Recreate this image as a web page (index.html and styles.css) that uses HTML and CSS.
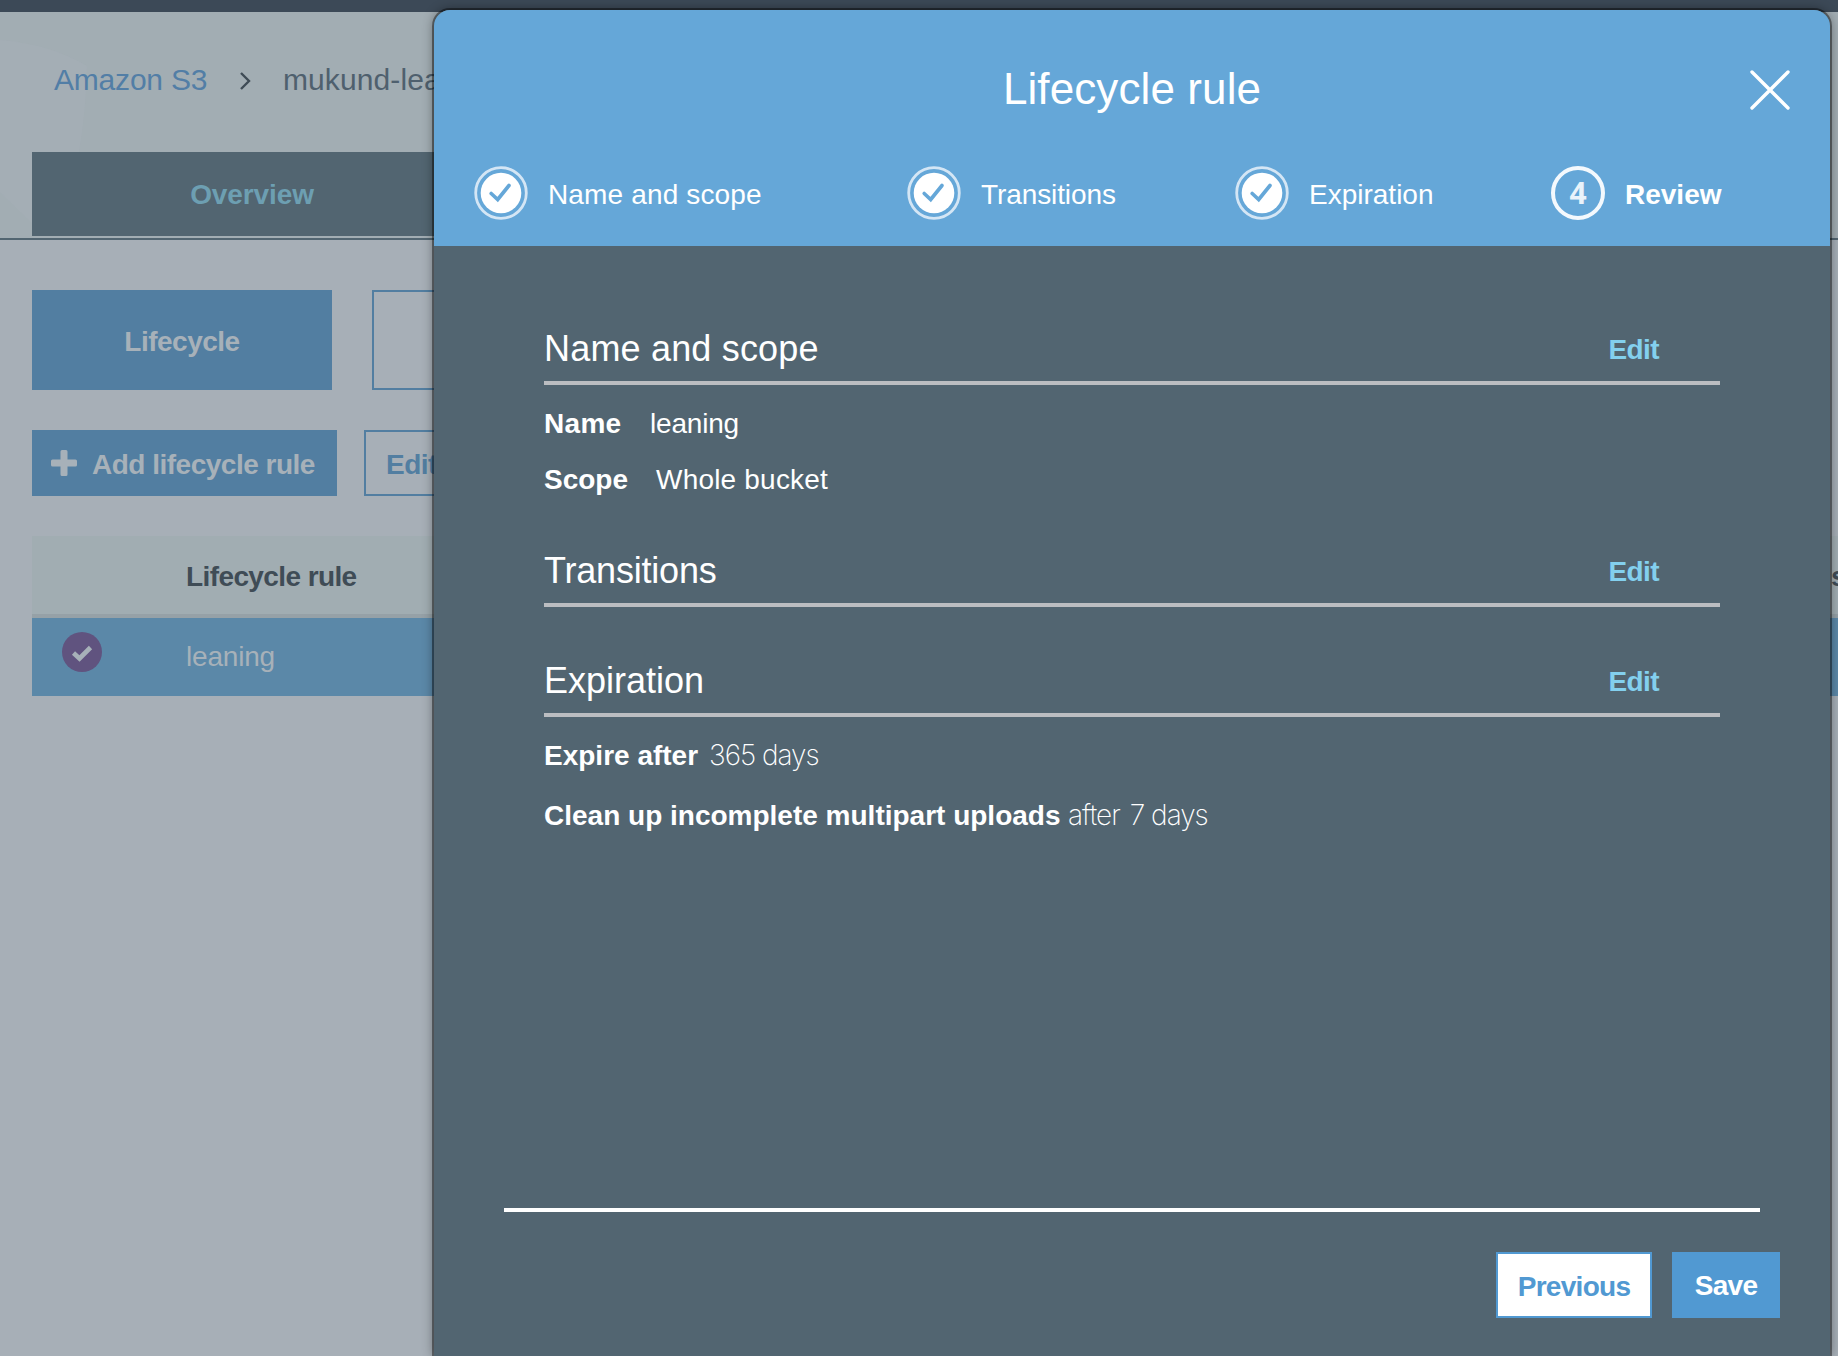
FILE: index.html
```html
<!DOCTYPE html>
<html lang="en">
<head>
<meta charset="utf-8">
<title>Lifecycle rule</title>
<link rel="stylesheet" href="styles.css">
</head>
<body>
<div class="page">
  <div class="topbar"></div>
  <header class="masthead">
    <svg class="swirl" viewBox="0 0 90 226" width="90" height="226"><path d="M0 28Q50 32 87 54Q86 100 79 140L32 211L0 180Z" fill="#a6afb7" opacity=".45"/></svg>
    <nav class="crumbs">
      <a class="crumb-link">Amazon S3</a>
      <svg class="chevron" width="12" height="20" viewBox="0 0 12 20"><path d="M2 2L10 10L2 18" fill="none" stroke="#3f4c56" stroke-width="2.4"/></svg>
      <span class="crumb-current">mukund-leaning</span>
    </nav>
    <div class="tab">Overview</div>
  </header>
  <main class="content">
    <div class="row modes">
      <div class="mode filled">Lifecycle</div>
      <div class="mode outlined"></div>
    </div>
    <div class="row actions">
      <div class="action filled"><svg width="26" height="26" viewBox="0 0 26 26"><path d="M11 0h4q1.500 0 1.500 1.500v8h8q1.500 0 1.500 1.500v4q0 1.500-1.500 1.500h-8v8q0 1.500-1.500 1.500h-4q-1.500 0-1.500-1.500v-8h-8q-1.500 0-1.500-1.500v-4q0-1.500 1.500-1.500h8v-8q0-1.500 1.500-1.500z" fill="#a7b1b9"/></svg><span>Add lifecycle rule</span></div>
      <div class="action outlined">Edit</div>
    </div>
    <div class="table">
      <div class="thead"><span>Lifecycle rule</span><span class="th-end">s</span></div>
      <div class="trow">
        <svg class="selected" width="40" height="40" viewBox="0 0 40 40"><circle cx="20" cy="20" r="20" fill="#60537f"/><path d="M11.500 21L17.500 26.500L28.500 15.500" fill="none" stroke="#a7b1b9" stroke-width="4.600"/></svg>
        <span>leaning</span>
      </div>
    </div>
  </main>
</div>

<section class="modal">
  <header class="modal-head">
    <h1>Lifecycle rule</h1>
    <svg class="close" width="40" height="40" viewBox="0 0 40 40"><path d="M2 2L38 38M38 2L2 38" fill="none" stroke="#fff" stroke-width="3.400" stroke-linecap="round"/></svg>
    <ol class="steps">
      <li><svg width="54" height="54" viewBox="0 0 54 54"><circle cx="27" cy="27" r="25.300" fill="none" stroke="#d4e6f5" stroke-width="2.800"/><circle cx="27" cy="27" r="20.300" fill="#fff"/><path d="M17.200 27.500L23.700 33.500L35 19.500" fill="none" stroke="#65a7d8" stroke-width="3.600" stroke-linecap="round"/></svg><span class="wide">Name and scope</span></li>
      <li><svg width="54" height="54" viewBox="0 0 54 54"><circle cx="27" cy="27" r="25.300" fill="none" stroke="#d4e6f5" stroke-width="2.800"/><circle cx="27" cy="27" r="20.300" fill="#fff"/><path d="M17.200 27.500L23.700 33.500L35 19.500" fill="none" stroke="#65a7d8" stroke-width="3.600" stroke-linecap="round"/></svg><span class="tight">Transitions</span></li>
      <li><svg width="54" height="54" viewBox="0 0 54 54"><circle cx="27" cy="27" r="25.300" fill="none" stroke="#d4e6f5" stroke-width="2.800"/><circle cx="27" cy="27" r="20.300" fill="#fff"/><path d="M17.200 27.500L23.700 33.500L35 19.500" fill="none" stroke="#65a7d8" stroke-width="3.600" stroke-linecap="round"/></svg><span>Expiration</span></li>
      <li class="current"><b class="number">4</b><span>Review</span></li>
    </ol>
  </header>
  <div class="modal-body">
    <div class="section-head scope-head"><h2>Name and scope</h2><a>Edit</a></div>
    <div class="field name"><b>Name</b><span>leaning</span></div>
    <div class="field scope"><b>Scope</b><span>Whole bucket</span></div>
    <div class="section-head transitions"><h2>Transitions</h2><a>Edit</a></div>
    <div class="section-head expiration"><h2>Expiration</h2><a>Edit</a></div>
    <div class="field expire"><b>Expire after</b><span class="light">365 days</span></div>
    <div class="field cleanup"><b>Clean up incomplete multipart uploads</b><span class="light">after</span><span class="light count">7 days</span></div>
  </div>
  <footer class="modal-foot">
    <div class="btn previous">Previous</div>
    <div class="btn save">Save</div>
  </footer>
</section>
</body>
</html>
```
FILE: styles.css
```css
* { box-sizing: border-box; }
body {
  margin: 0;
  width: 1838px;
  height: 1356px;
  overflow: hidden;
  position: relative;
  background: #a7afb7;
  font-family: "Liberation Sans", Arial, sans-serif;
  font-size: 28px;
}
h1, h2, ol { margin: 0; padding: 0; font-weight: 400; list-style: none; }

/* Dimmed console page */
.topbar { height: 12px; background: #3c4957; }
.masthead {
  position: relative;
  height: 228px;
  padding-left: 32px;
  background: #a2adb3;
  border-bottom: 2px solid #526571;
}
.swirl { position: absolute; left: 0; top: 0; }
.crumbs {
  position: relative;
  display: flex;
  align-items: center;
  height: 140px;
  padding: 0 0 4px 22px;
  font-size: 30px;
  line-height: 34px;
}
.crumb-link { width: 185px; color: #527ea6; letter-spacing: -.2px; }
.chevron { margin-right: 32px; margin-top: 2px; }
.crumb-current { color: #4f606e; letter-spacing: .1px; }
.tab {
  position: relative;
  width: 440px;
  height: 84px;
  padding-top: 1px;
  line-height: 84px;
  background: #526571;
  color: #6d9fb2;
  font-weight: 700;
  text-align: center;
  letter-spacing: -.1px;
}
.content { padding: 50px 0 0 32px; }
.row { display: flex; font-weight: 700; letter-spacing: -.5px; }
.filled { background: #527ea1; color: #a7b1b9; }
.outlined { border: 2px solid #527ea1; color: #527ea1; }
.modes { gap: 40px; height: 100px; margin-bottom: 40px; }
.mode { width: 300px; padding-top: 2px; line-height: 100px; text-align: center; }
.actions { gap: 27px; height: 66px; margin-bottom: 40px; }
.action { display: flex; align-items: center; line-height: 66px; padding-top: 4px; }
.action.filled { width: 305px; padding-left: 19px; gap: 15px; }
.action.filled svg { margin-top: -4px; }
.action.outlined { width: 200px; padding-left: 20px; }
.thead {
  display: flex;
  justify-content: space-between;
  height: 82px;
  padding: 2px 0 0 154px;
  line-height: 78px;
  background: #a1adb2;
  border-bottom: 4px solid #96a1a7;
  color: #3f4c56;
  font-weight: 700;
  letter-spacing: -.6px;
}
.th-end { width: 7px; }
.trow {
  display: flex;
  height: 78px;
  padding-left: 30px;
  line-height: 78px;
  background: #5b88a8;
  color: #a7b1b9;
  letter-spacing: -.2px;
}
.selected { margin: 14px 84px 0 0; }

/* Wizard dialog over the page */
.modal {
  position: absolute;
  left: 434px;
  top: 10px;
  width: 1396px;
  height: 1346px;
  display: flex;
  flex-direction: column;
  border-radius: 16px 16px 0 0;
  background: #526571;
  color: #fff;
  box-shadow: 0 0 0 2px rgba(0, 0, 0, .4), 0 0 12px rgba(0, 0, 0, .45);
}
.modal-head {
  position: relative;
  height: 236px;
  padding-top: 54px;
  border-radius: 16px 16px 0 0;
  background: #65a7d8;
}
h1 { font-size: 44px; line-height: 50px; text-align: center; letter-spacing: .1px; }
.close { position: absolute; right: 40px; top: 60px; }
.steps {
  display: grid;
  grid-template-columns: 433px 328px 316px 1fr;
  margin-top: 52px;
  padding-left: 40px;
}
.steps li { display: flex; align-items: center; gap: 20px; height: 54px; line-height: 54px; }
.steps span { padding-top: 3px; }
.wide { letter-spacing: .15px; }
.tight { letter-spacing: -.1px; }
.current { font-weight: 700; }
.number {
  width: 54px;
  height: 54px;
  border: 4px solid #f4f9fd;
  border-radius: 50%;
  font: 700 30px/46px "Open Sans", sans-serif;
  text-align: center;
  color: #eaf3fa;
}
.modal-body { flex: 1; padding: 71px 110px 0; }
.section-head {
  display: flex;
  justify-content: space-between;
  align-items: center;
  height: 68px;
  padding: 0 61px 0 0;
  border-bottom: 4px solid #bbbdc1;
}
h2 { font-size: 36px; line-height: 64px; }
.section-head a { color: #83d0ee; font-weight: 700; letter-spacing: -.6px; padding-top: 2px; }
.scope-head h2 { letter-spacing: .18px; }
.transitions h2 { letter-spacing: -.2px; }
.field { display: flex; align-items: baseline; line-height: 32px; white-space: pre; }
.name { margin-top: 23px; }
.scope { margin-top: 24px; }
.name b { width: 106px; letter-spacing: .3px; }
.name span { letter-spacing: -.2px; }
.scope b { width: 112px; }
.scope span { letter-spacing: .2px; }
.transitions { margin-top: 43px; }
.expiration { margin-top: 42px; }
.expire { margin-top: 22px; }
.cleanup { margin-top: 27px; }
.expire b { width: 165px; }
.cleanup b { width: 524px; }
.light { font-family: Inter, sans-serif; font-weight: 200; letter-spacing: -1px; }
.count { margin-left: 10px; }
.modal-foot {
  display: flex;
  justify-content: flex-end;
  gap: 20px;
  height: 148px;
  margin: 0 70px;
  padding-top: 40px;
  border-top: 4px solid #fff;
}
.btn { height: 66px; line-height: 66px; padding-top: 1px; text-align: center; font-weight: 700; letter-spacing: -.7px; }
.previous { width: 156px; line-height: 63px; background: #fff; border: 2px solid #5199d2; color: #5199d2; }
.save { width: 108px; margin-right: -20px; background: #5199d2; }
```
